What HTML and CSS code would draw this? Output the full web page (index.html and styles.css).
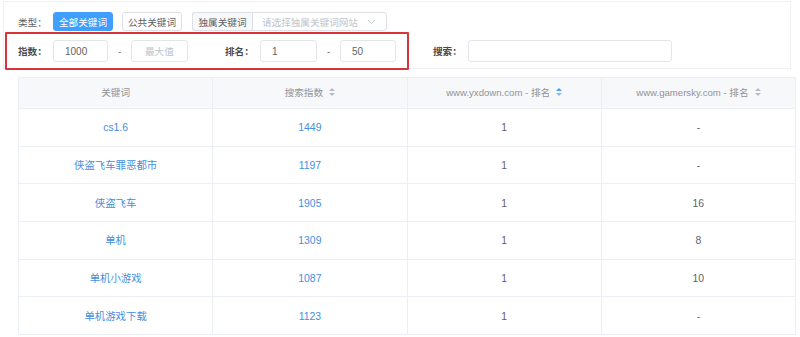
FILE: index.html
```html
<!DOCTYPE html>
<html lang="zh-CN">
<head>
<meta charset="utf-8">
<title>关键词排名</title>
<link rel="stylesheet" href="styles.css">
</head>
<body>
<div class="page">
  <div class="filter-card">
    <div class="row row-type">
      <span class="label">类型：</span>
      <button class="btn btn-primary">全部关键词</button>
      <button class="btn">公共关键词</button>
      <div class="group">
        <span class="prepend">独属关键词</span>
        <div class="select">
          <span class="placeholder">请选择独属关键词网站</span>
          <svg class="chev" width="9" height="6" viewBox="0 0 9 6"><path d="M1 1 L4.5 4.5 L8 1" fill="none" stroke="#c0c4cc" stroke-width="1"/></svg>
        </div>
      </div>
    </div>
    <div class="row row-range">
      <span class="label strong">指数：</span>
      <span class="input w55">1000</span>
      <span class="dash">-</span>
      <span class="input w57 ph">最大值</span>
      <span class="label strong gap-l">排名：</span>
      <span class="input w57">1</span>
      <span class="dash">-</span>
      <span class="input w56">50</span>
      <span class="label strong gap-l">搜索：</span>
      <span class="input w204"></span>
    </div>
    <div class="highlight"></div>
  </div>

  <table class="data">
    <colgroup><col><col><col><col></colgroup>
    <thead>
      <tr>
        <th>关键词</th>
        <th>搜索指数<span class="caret"><i class="up"></i><i class="down"></i></span></th>
        <th>www.yxdown.com - 排名<span class="caret active-asc"><i class="up"></i><i class="down"></i></span></th>
        <th>www.gamersky.com - 排名<span class="caret"><i class="up"></i><i class="down"></i></span></th>
      </tr>
    </thead>
    <tbody>
      <tr><td class="link">cs1.6</td><td class="link">1449</td><td>1</td><td>-</td></tr>
      <tr><td class="link">侠盗飞车罪恶都市</td><td class="link">1197</td><td>1</td><td>-</td></tr>
      <tr><td class="link">侠盗飞车</td><td class="link">1905</td><td>1</td><td>16</td></tr>
      <tr><td class="link">单机</td><td class="link">1309</td><td>1</td><td>8</td></tr>
      <tr><td class="link">单机小游戏</td><td class="link">1087</td><td>1</td><td>10</td></tr>
      <tr><td class="link">单机游戏下载</td><td class="link">1123</td><td>1</td><td>-</td></tr>
    </tbody>
  </table>
</div>
</body>
</html>
```

FILE: styles.css
```css
html, body {
  margin: 0;
  padding: 0;
  background: #fff;
}

body {
  font-family: "Liberation Sans", "Noto Sans CJK SC", sans-serif;
  color: #606266;
  font-size: 9.6px;
  overflow: hidden;
}

.page {
  padding: 1px 0 0 3px;
}

.filter-card {
  position: relative;
  width: 788px;
  height: 68px;
  border: 1px solid #eef0f3;
  box-sizing: border-box;
  padding: 10px 0 0 14px;
  display: flex;
  flex-direction: column;
  gap: 9px;
}

.row {
  display: flex;
  align-items: center;
}

.row-type {
  height: 19px;
}

.row-range {
  height: 22px;
}

.label {
  width: 35px;
  flex: none;
  color: #606266;
  white-space: nowrap;
}

.label.strong {
  font-weight: bold;
  color: #4a4c50;
}

.gap-l {
  margin-left: 37px;
}

.btn {
  width: 60px;
  height: 19px;
  padding: 0;
  margin: 0 9px 0 0;
  border: 1px solid #dcdfe6;
  border-radius: 3px;
  background: #fff;
  color: #606266;
  font-family: inherit;
  font-size: 9.6px;
  box-sizing: border-box;
}

.btn-primary {
  background: #409eff;
  border-color: #409eff;
  color: #fff;
}

.group {
  display: flex;
  height: 19px;
  margin-left: 1px;
}

.prepend {
  width: 60px;
  box-sizing: border-box;
  border: 1px solid #dcdfe6;
  border-right: none;
  border-radius: 3px 0 0 3px;
  background: #f7f8fa;
  color: #606266;
  display: flex;
  align-items: center;
  justify-content: center;
}

.select {
  width: 135px;
  box-sizing: border-box;
  border: 1px solid #dcdfe6;
  border-radius: 0 3px 3px 0;
  display: flex;
  align-items: center;
  justify-content: space-between;
  padding: 0 10px 0 9px;
}

.placeholder {
  color: #c0c4cc;
  white-space: nowrap;
}

.input {
  height: 22px;
  box-sizing: border-box;
  border: 1px solid #e2e5ea;
  border-radius: 3px;
  display: flex;
  align-items: center;
  padding-left: 11px;
  color: #606266;
  font-size: 10px;
  flex: none;
}

.input.ph {
  color: #c0c4cc;
  font-size: 9.6px;
  padding-left: 13px;
}

.w55 { width: 55px; }
.w56 { width: 56px; }
.w57 { width: 57px; }
.w204 { width: 204px; }

.dash {
  width: 23px;
  text-align: center;
  color: #606266;
  flex: none;
}

.highlight {
  position: absolute;
  left: 1px;
  top: 30px;
  width: 404px;
  height: 38px;
  border: 2px solid #d8343c;
  box-sizing: border-box;
  border-radius: 1px;
  pointer-events: none;
}

.data {
  margin: 8px 0 0 15px;
  width: 778px;
  border-collapse: collapse;
  table-layout: fixed;
}

.data th,
.data td {
  border: 1px solid #ebeef5;
  text-align: center;
  padding: 0;
  white-space: nowrap;
  line-height: 12px;
}

.data th {
  height: 30px;
  background: #f6f8fa;
  color: #909399;
  font-weight: normal;
  font-size: 9.6px;
}

.data td {
  height: 34.7px;
  padding-top: 2px;
  font-size: 10.4px;
  color: #606266;
}

.data td.link {
  color: #3f8fe0;
}

.caret {
  display: inline-flex;
  flex-direction: column;
  gap: 2px;
  vertical-align: middle;
  margin-left: 6px;
  position: relative;
  top: -1px;
}

.caret i {
  display: block;
  width: 0;
  height: 0;
  border-left: 3px solid transparent;
  border-right: 3px solid transparent;
}

.caret .up {
  border-bottom: 3.5px solid #b4bccc;
}

.caret .down {
  border-top: 3.5px solid #b4bccc;
}

.caret.active-asc .up {
  border-bottom-color: #409eff;
}

.caret.active-asc .down {
  border-top-color: #8fb9ec;
}
```
